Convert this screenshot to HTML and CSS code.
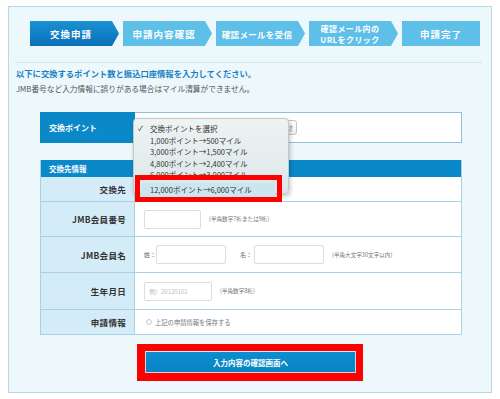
FILE: index.html
```html
<html lang="ja">
<head>
    <meta charset="UTF-8">
    <meta name="viewport" content="width=device-width, initial-scale=1.0">
    <title>マイル交換申請</title>
    <link rel="stylesheet" href="styles.css">
</head>
<body>
    <div class="panel">
        <ol class="steps">
            <li class="step current">交換申請</li>
            <li class="step">申請内容確認</li>
            <li class="step small">確認メールを受信</li>
            <li class="step double">確認メール内の<br>URLをクリック</li>
            <li class="step last">申請完了</li>
        </ol>
        <div class="rule"></div>
        <p class="lead">以下に交換するポイント数と振込口座情報を入力してください。</p>
        <p class="note">JMB番号など入力情報に誤りがある場合はマイル清算ができません。</p>

        <div class="form">
            <div class="point-row">
                <div class="point-label">交換ポイント</div>
                <div class="point-value">
                    <div class="select-box"><span class="select-arrow">&#8693;</span></div>
                </div>
            </div>

            <div class="info">
                <div class="info-head">交換先情報</div>
                <div class="info-row h25">
                    <div class="info-label">交換先</div>
                    <div class="info-value"></div>
                </div>
                <div class="info-row h35">
                    <div class="info-label">JMB会員番号</div>
                    <div class="info-value">
                        <span class="field w57"></span>
                        <span class="hint">(半角数字7桁または9桁)</span>
                    </div>
                </div>
                <div class="info-row h36">
                    <div class="info-label">JMB会員名</div>
                    <div class="info-value">
                        <span class="tag">姓：</span><span class="field w70"></span>
                        <span class="tag gap">名：</span><span class="field w70"></span>
                        <span class="hint">(半角大文字30文字以内)</span>
                    </div>
                </div>
                <div class="info-row h37">
                    <div class="info-label">生年月日</div>
                    <div class="info-value">
                        <span class="field w68 ph">例）20120101</span>
                        <span class="hint">(半角数字8桁)</span>
                    </div>
                </div>
                <div class="info-row h25">
                    <div class="info-label">申請情報</div>
                    <div class="info-value">
                        <span class="radio"></span>
                        <span class="save">上記の申請情報を保存する</span>
                    </div>
                </div>
            </div>
        </div>

        <div class="submit-wrap">
            <div class="submit-mark">
                <button class="submit">入力内容の確認画面へ</button>
            </div>
        </div>
    </div>

    <ul class="dropdown">
        <li class="checked">交換ポイントを選択</li>
        <li>1,000ポイント→500マイル</li>
        <li>3,000ポイント→1,500マイル</li>
        <li>4,800ポイント→2,400マイル</li>
        <li>6,000ポイント→3,000マイル</li>
        <li class="hover">12,000ポイント→6,000マイル</li>
    </ul>
    <div class="mark-box"></div>
</body>
</html>
```

FILE: styles.css
```css
*{
    margin: 0;
    padding: 0;
    box-sizing: border-box;
}
ul, ol{
    list-style: none;
}
body{
    background: #fff;
    font-family: "Noto Sans CJK JP", "Noto Sans", sans-serif;
    color: #444;
    position: relative;
}

.panel{
    margin: 6px 0 0 8px;
    width: 484px;
    border: 1px solid #b9d8e6;
    background: #edf8fc;
    padding: 14px 0 11px 0;
}

/* steps */
.steps{
    display: flex;
    gap: 4px;
    padding-left: 21px;
    height: 25px;
}
.step{
    width: 89px;
    height: 25px;
    padding-right: 7px;
    background: #5ec0e8;
    color: #fff;
    font-weight: bold;
    font-size: 9.5px;
    letter-spacing: 1px;
    display: flex;
    align-items: center;
    justify-content: center;
    text-align: center;
    clip-path: polygon(0 0, calc(100% - 7px) 0, 100% 50%, calc(100% - 7px) 100%, 0 100%);
}
.step.current{
    background: linear-gradient(#1a92d4, #0a6fb6);
}
.step.small{
    font-size: 8.5px;
    letter-spacing: 0.3px;
}
.step.double{
    font-size: 8px;
    line-height: 11px;
    letter-spacing: 0.4px;
}
.step.last{
    width: 78px;
    padding-right: 0;
    clip-path: none;
}

.rule{
    margin: 16px 9px 0 6px;
    height: 1px;
    background: #d3e5ec;
}
.lead{
    margin-top: 2px;
    padding-left: 7px;
    font-size: 8.3px;
    line-height: 16px;
    font-weight: bold;
    color: #1a80c2;
}
.note{
    padding-left: 7px;
    font-size: 7.7px;
    line-height: 16px;
    color: #555;
}

/* form */
.form{
    margin: 15px 0 0 31px;
    width: 422px;
}
.point-row{
    display: flex;
    height: 31px;
}
.point-label{
    width: 95px;
    background: #0a88c8;
    color: #fff;
    font-weight: bold;
    font-size: 8px;
    padding-left: 9px;
    display: flex;
    align-items: center;
}
.point-value{
    flex: 1;
    background: #fff;
    border: 1px solid #8ec2db;
    border-left: 0;
    display: flex;
    align-items: center;
    padding-left: 8px;
}
.select-box{
    width: 154px;
    height: 15px;
    border: 1px solid #c4c4c4;
    border-radius: 3px;
    background: linear-gradient(#fff, #eee);
    display: flex;
    align-items: center;
    justify-content: flex-end;
    padding-right: 3px;
}
.select-arrow{
    font-size: 7px;
    color: #666;
}

.info{
    margin-top: 17px;
    border-right: 1px solid #a9d0e4;
    border-left: 1px solid #a9d0e4;
}
.info-head{
    height: 17px;
    background: #0a88c8;
    color: #fff;
    font-weight: bold;
    font-size: 7.5px;
    padding-left: 8px;
    display: flex;
    align-items: center;
}
.info-row{
    display: flex;
    border-bottom: 1px solid #a9d0e4;
    background: #fff;
}
.h25{ height: 25px; }
.h35{ height: 35px; }
.h36{ height: 36px; }
.h37{ height: 37px; }
.info-label{
    width: 94px;
    background: #d4ebf8;
    border-right: 1px solid #a9d0e4;
    font-weight: bold;
    font-size: 8.5px;
    color: #333;
    letter-spacing: 0.3px;
    display: flex;
    align-items: center;
    justify-content: flex-end;
    padding-right: 8px;
}
.info-value{
    flex: 1;
    display: flex;
    align-items: center;
    padding-left: 9px;
}
.field{
    display: inline-block;
    height: 19px;
    border: 1px solid #ddd;
    border-radius: 2px;
    background: #fff;
}
.w57{ width: 57px; }
.w70{ width: 70px; }
.w68{ width: 68px; }
.field.ph{
    font-size: 6px;
    color: #bbb;
    line-height: 17px;
    padding-left: 4px;
}
.hint{
    margin-left: 8px;
    font-size: 5.6px;
    color: #777;
}
.tag{
    font-size: 6px;
    color: #666;
    width: 12px;
}
.tag.gap{
    margin-left: 14px;
    width: 14px;
}
.radio{
    width: 6px;
    height: 6px;
    border: 1px solid #ccc;
    border-radius: 50%;
    margin: 0 3px 0 2px;
}
.save{
    font-size: 6.3px;
    color: #777;
}

/* submit */
.submit-wrap{
    display: flex;
    justify-content: center;
    margin-top: 9px;
}
.submit-mark{
    background: #f00;
    padding: 7px 7px 8px 8px;
}
.submit{
    display: block;
    width: 211px;
    height: 22px;
    border: 1px solid #c9dbe4;
    border-top-color: #e4eef3;
    background: linear-gradient(#0b8ed0, #0a84c3);
    color: #fff;
    font-family: "Noto Sans CJK JP", sans-serif;
    font-size: 7.5px;
    font-weight: bold;
}

/* opened select list */
.dropdown{
    position: absolute;
    left: 133px;
    top: 118px;
    width: 156px;
    height: 76px;
    padding-top: 4px;
    border: 1px solid #bfc9cb;
    border-radius: 4px;
    background: linear-gradient(#eef3f3, #dbe7e9);
    box-shadow: 1px 2px 4px rgba(0, 0, 0, 0.25);
    font-size: 7.5px;
    color: #333;
}
.dropdown li{
    height: 11.5px;
    line-height: 11.5px;
    padding-left: 16px;
    position: relative;
}
.dropdown li.checked::before{
    content: "\2713";
    position: absolute;
    left: 4px;
    font-size: 7px;
}
.dropdown li.hover{
    margin: 2px 13px 0 7px;
    height: 14px;
    line-height: 14px;
    padding-left: 9px;
    background: #cbe6ef;
}
.mark-box{
    position: absolute;
    left: 135px;
    top: 175px;
    width: 147px;
    height: 27px;
    border: 5px solid #f00;
}
```
